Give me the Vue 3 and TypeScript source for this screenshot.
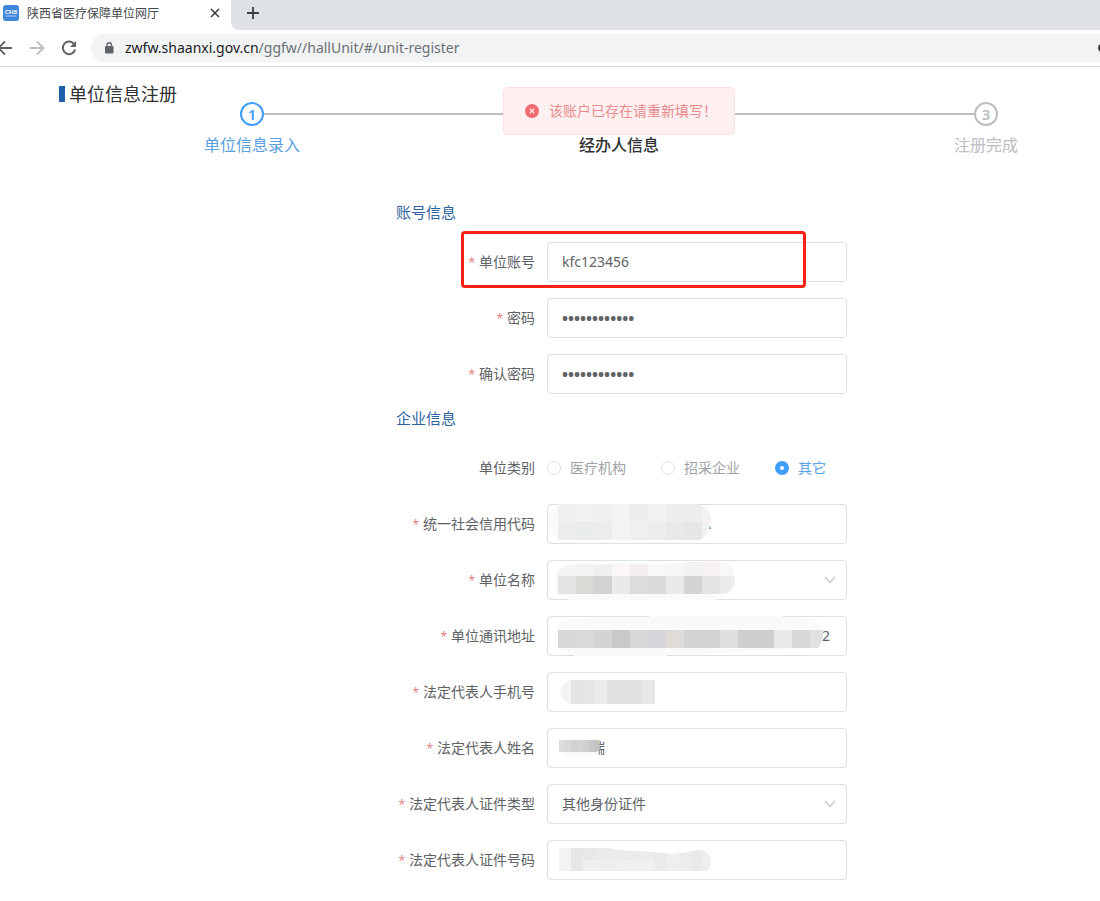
<script setup lang="ts">
import { ref } from 'vue'

interface Cell { x: number; y: number; w: number; h: number; fill: string }
interface Mask { haze: string; clip: string; cells: Cell[] }
interface Field {
  id: string
  label: string
  kind: 'text' | 'password' | 'select'
  value: string
  tail?: string
  mask?: Mask
  marked?: boolean
}

const strip = (x: number, y: number, h: number, w: number, fills: string[]): Cell[] =>
  fills.map((fill, i) => ({ x: x + i * w, y, w, h, fill: '#' + fill }))

const accountFields = ref<Field[]>([
  { id: 'account', label: '单位账号', kind: 'text', value: 'kfc123456', marked: true },
  { id: 'password', label: '密码', kind: 'password', value: '************' },
  { id: 'confirm', label: '确认密码', kind: 'password', value: '************' },
])

const companyFields = ref<Field[]>([
  {
    id: 'credit', label: '统一社会信用代码', kind: 'text', value: 'A', tail: 'tail-credit',
    mask: {
      haze: 'M19 0H40V36H19A18 18 0 0 1 19 0Z',
      clip: 'M11 0H146Q164 1 164 18Q162 30 154 36H11Z',
      cells: [
        ...strip(11, 0, 18, 18, ['f0f0f0', 'f2f2f2', 'f0f1ee', 'f4f4f2', 'ededed', 'f2f2f2', 'eeeeee', 'eeeeee', 'f1f1f1']),
        ...strip(11, 18, 18, 18, ['eceeee', 'e8eceb', 'ededed', 'f3f3f3', 'eeefef', 'ededed', 'e9e9e7', 'e5e7e4', 'f0f2f1']),
      ],
    },
  },
  {
    id: 'name', label: '单位名称', kind: 'select', value: '',
    mask: {
      haze: 'M7 20Q9 6 22 5H170V40H24Q8 38 7 20Z',
      clip: 'M11 10Q18 4 28 4H120L140 2H172Q188 4 188 19Q187 30 178 34H11Z',
      cells: [
        ...strip(11, 2, 14, 18, ['f5f5f5', 'f3f3f3', 'f0f0f0', 'fbf7f9', 'f3eff0', 'f9f9f9', 'f7f7f8', 'f2f2f4', 'f7f3f5', 'f8f8f8']),
        ...strip(11, 16, 18, 18, ['e3e3e3', 'd9d9d6', 'd1d3d2', 'e9e9ea', 'dcdcda', 'dbdbdb', 'e7eae8', 'd4d4d4', 'e4e4e4', 'e9eceb']),
      ],
    },
  },
  {
    id: 'address', label: '单位通讯地址', kind: 'text', value: '2', tail: 'tail-address',
    mask: {
      haze: 'M8 20Q8 4 22 3L118 0H230L264 3Q274 8 276 16L270 32L110 40H30Q10 38 8 20Z',
      clip: 'M11 14H276Q277 24 271 32H11Z',
      cells: strip(11, 14, 18, 18, ['d7d9d8', 'dadada', 'd4d4d2', 'c9c9c9', 'd8d8da', 'd5d6d9', 'dedbd9', 'd3d3d3', 'd2d4d3', 'dddfde', 'cfcfcf', 'cecece', 'e7eae9', 'd7d7d8', 'dee1e0']),
    },
  },
  {
    id: 'phone', label: '法定代表人手机号', kind: 'text', value: '',
    mask: {
      haze: '',
      clip: 'M24 8H108V32H24Q13 28 13 20T24 8Z',
      cells: strip(12, 8, 24, 12, ['f3f3f3', 'e4e4e4', 'e6e6e6', 'ebebeb', 'e2e2e2', 'e1e1e1', 'e2e2e2', 'e7e7e7']),
    },
  },
  {
    id: 'person', label: '法定代表人姓名', kind: 'text', value: '瑞', tail: 'tail-person',
    mask: {
      haze: 'M12 20H51V27L46 29H20Q14 28 12 20Z',
      clip: 'M12 12H52L53 21L50 24H12Z',
      cells: strip(12, 12, 13, 6, ['dcdcdc', 'd8d8d8', 'd2d2d2', 'd4d4d4', 'cfcfcf', 'c6c6c6', 'c3c3c3']),
    },
  },
  { id: 'idtype', label: '法定代表人证件类型', kind: 'select', value: '其他身份证件' },
  {
    id: 'idno', label: '法定代表人证件号码', kind: 'text', value: '',
    mask: {
      haze: '',
      clip: 'M12 8H60L72 10L106 12L125 14L142 12Q152 8 160 12Q168 22 160 31H12Z',
      cells: [
        ...strip(12, 8, 24, 12, ['f3f3f3', 'e7e7e7', 'e8e8e8', 'eaeaea', 'ececec', 'ebebeb', 'ececec', 'ededed', 'eaeaea', 'efefef', 'ececec', 'e9e9e9', 'eeeeee']),
        ...strip(36, 20, 12, 18, ['efefef', 'eeeeee', 'f0f0f0', 'f0f0f0']),
      ],
    },
  },
])

const groups = [
  { title: '账号信息', fields: accountFields, radios: false },
  { title: '企业信息', fields: companyFields, radios: true },
]
const kinds = ['医疗机构', '招采企业', '其它']
const kind = ref('其它')
</script>

<template>
  <div class="window">
    <header>
      <div class="tabs">
        <div class="tab">
          <svg class="favicon" viewBox="0 0 16 16" aria-hidden="true">
            <rect width="16" height="16" rx="3" fill="#3f86dc" />
            <text x="8" y="9" text-anchor="middle" class="logo-text">CHS</text>
            <path d="M2.500 11H13.500" stroke="#a9cdf5" stroke-width="1" />
          </svg>
          <span class="tab-title">陕西省医疗保障单位网厅</span>
          <button class="icon-btn" aria-label="关闭标签页">
            <svg width="10" height="10" viewBox="0 0 10 10"><path d="M1 1L9 9M9 1L1 9" stroke="#3c4043" stroke-width="1.600" /></svg>
          </button>
        </div>
        <div class="strip">
          <button class="icon-btn" aria-label="新标签页">
            <svg width="12" height="12" viewBox="0 0 12 12"><path d="M6 0V12M0 6H12" stroke="#3c4043" stroke-width="1.800" /></svg>
          </button>
        </div>
      </div>
      <div class="toolbar">
        <nav>
          <button class="icon-btn" aria-label="后退">
            <svg width="16" height="16" viewBox="0 0 16 16" fill="none" stroke="#5f6368" stroke-width="1.800"><path d="M15 8H2M8 1.500L1.500 8L8 14.500" /></svg>
          </button>
          <button class="icon-btn" aria-label="前进">
            <svg width="16" height="16" viewBox="0 0 16 16" fill="none" stroke="#bcbec1" stroke-width="1.800"><path d="M1 8H14M8 1.500L14.500 8L8 14.500" /></svg>
          </button>
          <button class="icon-btn" aria-label="刷新">
            <svg width="16" height="16" viewBox="0 0 16 16"><path d="M13.300 4.200A6.300 6.300 0 1 0 14.200 9.500" fill="none" stroke="#5f6368" stroke-width="2" /><path d="M15 1V7H9Z" fill="#5f6368" /></svg>
          </button>
        </nav>
        <div class="omnibox">
          <svg width="10" height="12" viewBox="0 0 10 12"><rect x="1" y="4" width="8.500" height="7.500" rx="1" fill="#5f6368" /><path d="M3 5V3A2.250 2.250 0 0 1 7.500 3V5" fill="none" stroke="#5f6368" stroke-width="1.300" /></svg>
          <span class="url"><b>zwfw.shaanxi.gov.cn</b>/ggfw//hallUnit/#/unit-register</span>
          <svg class="key" width="2" height="10" viewBox="0 0 2 10"><circle cx="4" cy="5" r="4" fill="#3c4043" /></svg>
        </div>
      </div>
    </header>

    <main>
      <h1>单位信息注册</h1>
      <ol class="steps">
        <li class="step active"><span class="dot">1</span><span>单位信息录入</span></li>
        <li class="line" aria-hidden="true"></li>
        <li class="step current">
          <span class="dot"></span><span>经办人信息</span>
          <div class="toast" role="alert">
            <svg width="14" height="14" viewBox="0 0 14 14"><circle cx="7" cy="7" r="7" fill="#ee6b74" /><path d="M4.800 4.800L9.200 9.200M9.200 4.800L4.800 9.200" stroke="#fde8e8" stroke-width="1.300" /></svg>
            <span>该账户已存在请重新填写！</span>
          </div>
        </li>
        <li class="line" aria-hidden="true"></li>
        <li class="step"><span class="dot">3</span><span>注册完成</span></li>
      </ol>

      <form @submit.prevent>
        <section v-for="g in groups" :key="g.title">
          <h2>{{ g.title }}</h2>
          <div class="rows">
            <div v-if="g.radios" class="row" role="radiogroup" aria-labelledby="kind-label">
              <span id="kind-label" class="label">单位类别</span>
              <div class="radios">
                <label v-for="k in kinds" :key="k" :class="{ chosen: kind === k }">
                  <input v-model="kind" type="radio" name="kind" :value="k">{{ k }}
                </label>
              </div>
            </div>
            <div v-for="f in g.fields.value" :key="f.id" class="row">
              <label class="label required" :for="f.id">{{ f.label }}</label>
              <div class="control">
                <select v-if="f.kind === 'select'" :id="f.id" v-model="f.value">
                  <option :value="f.value">{{ f.value }}</option>
                </select>
                <input v-else :id="f.id" v-model="f.value" :type="f.kind" :class="f.tail" autocomplete="off">
                <svg v-if="f.kind === 'select'" class="chevron" width="12" height="8" viewBox="0 0 12 8"><path d="M1 1L6 6.500L11 1" fill="none" stroke="#c0c4cc" stroke-width="1.200" /></svg>
                <svg v-if="f.mask" class="mask" width="300" height="40" viewBox="0 0 300 40" shape-rendering="crispEdges" aria-hidden="true">
                  <clipPath :id="'clip-' + f.id"><path :d="f.mask.clip" /></clipPath>
                  <path :d="f.mask.haze" fill="#fafafa" />
                  <g :clip-path="`url(#clip-${f.id})`">
                    <rect v-for="(c, i) in f.mask.cells" :key="i" :x="c.x" :y="c.y" :width="c.w" :height="c.h" :fill="c.fill" />
                  </g>
                </svg>
              </div>
              <div v-if="f.marked" class="marker" aria-hidden="true"></div>
            </div>
          </div>
        </section>
      </form>
    </main>
  </div>
</template>

<style>
body { margin: 0; background: #fff; }
</style>

<style scoped>
* { box-sizing: border-box; }
.window { font-family: "Noto Sans", "Noto Sans CJK SC", sans-serif; font-size: 14px; color: #606266; overflow-x: hidden; }
.icon-btn { display: flex; align-items: center; justify-content: center; padding: 0; border: 0; background: none; flex: none; }
.tabs { display: flex; height: 30px; }
.tab { display: flex; align-items: center; width: 231px; padding: 0 11px 4px 3px; }
.favicon { width: 16px; height: 16px; margin-right: 8px; }
.logo-text { font: italic bold 6px "Liberation Sans", sans-serif; fill: #fff; }
.tab-title { flex: 1; padding-top: 2px; font-size: 12px; line-height: 18px; color: #45484c; }
.strip { flex: 1; display: flex; align-items: center; padding: 0 16px 4px; background: #dee1e6; border-bottom-left-radius: 8px; }
.toolbar { display: flex; align-items: center; height: 37px; padding: 0 0 1px; border-bottom: 1px solid #dadce0; }
nav { display: flex; gap: 16px; width: 91px; margin-left: -3px; }
.omnibox { flex: 1; display: flex; align-items: center; height: 28px; margin-left: 3px; padding-left: 13px; background: #f1f3f4; border-radius: 14px 0 0 14px; }
.url { flex: 1; margin-left: 11px; font-size: 14px; line-height: 20px; color: #6b6f74; }
.url b { font-weight: 400; color: #202124; }
main { padding-top: 15px; }
h1 { display: flex; align-items: center; gap: 4px; height: 24px; margin: 0 0 0 59px; font-size: 18px; font-weight: 400; line-height: 24px; color: #303133; }
h1::before { content: ""; width: 6px; height: 16px; background: #1f5fa9; }
.steps { display: grid; grid-template-columns: 96px 1fr 96px 1fr 96px; margin: -4px 66px 0 204px; padding: 0; list-style: none; }
.step { position: relative; display: flex; flex-direction: column; align-items: center; gap: 7px; font-size: 16px; line-height: 24px; color: #bcbec2; white-space: nowrap; }
.dot { display: flex; align-items: center; justify-content: center; width: 24px; height: 24px; border: 2px solid currentColor; border-radius: 50%; font-size: 15px; font-weight: 600; line-height: 20px; }
.active { color: #409eff; }
.active span:last-child { color: #5b9fe0; }
.current { color: #303133; font-weight: 500; }
.line { height: 2px; margin: 11px -36px 0; background: #bfbfc0; }
.toast { position: absolute; top: -15px; left: 50%; transform: translateX(-50%); display: flex; align-items: center; gap: 10px; width: 232px; height: 48px; padding-left: 21px; border: 1px solid #fde2e2; border-radius: 4px; background: #fef0f0; font-size: 14px; font-weight: 400; color: #e98a8d; }
form { width: 451px; margin: 43px 0 21px 36%; }
h2 { margin: 0 0 18px; font-size: 15px; font-weight: 400; line-height: 24px; color: #2f64a0; }
section + section { margin-top: 12px; }
.rows { display: grid; gap: 16px; }
.row { position: relative; display: grid; grid-template-columns: 139px 300px; gap: 12px; align-items: center; height: 40px; }
.label { text-align: right; line-height: 20px; white-space: nowrap; }
.required::before { content: "*"; margin-right: 4px; font-size: 12px; color: #e57f7f; }
.control { position: relative; height: 40px; }
.control input, .control select { width: 100%; height: 40px; padding: 0 14px 2px; border: 1px solid #dcdfe6; border-radius: 4px; background: #fff; color: #606266; font: inherit; appearance: none; outline: 0; }
.control input[type="password"] { padding-bottom: 0; font-size: 16px; font-weight: 700; }
.control .tail-credit { padding-left: 154px; }
.control .tail-address { padding-left: 274px; }
.control .tail-person { padding-left: 43px; }
.chevron { position: absolute; right: 11px; top: 16px; }
.mask { position: absolute; inset: 0; pointer-events: none; }
.radios { display: flex; gap: 35px; }
.radios label { display: flex; align-items: center; gap: 9px; line-height: 20px; color: #a0a2a6; white-space: nowrap; }
.radios .chosen { color: #5aa2ea; }
.radios input { width: 14px; height: 14px; margin: 0; border: 1px solid #dcdfe6; border-radius: 50%; appearance: none; background: #fff; }
.radios input:checked { border: 5px solid #409eff; }
.marker { position: absolute; left: 65px; top: -11px; width: 345px; height: 57px; border: 3px solid #fd2014; border-radius: 4px; pointer-events: none; }
</style>
